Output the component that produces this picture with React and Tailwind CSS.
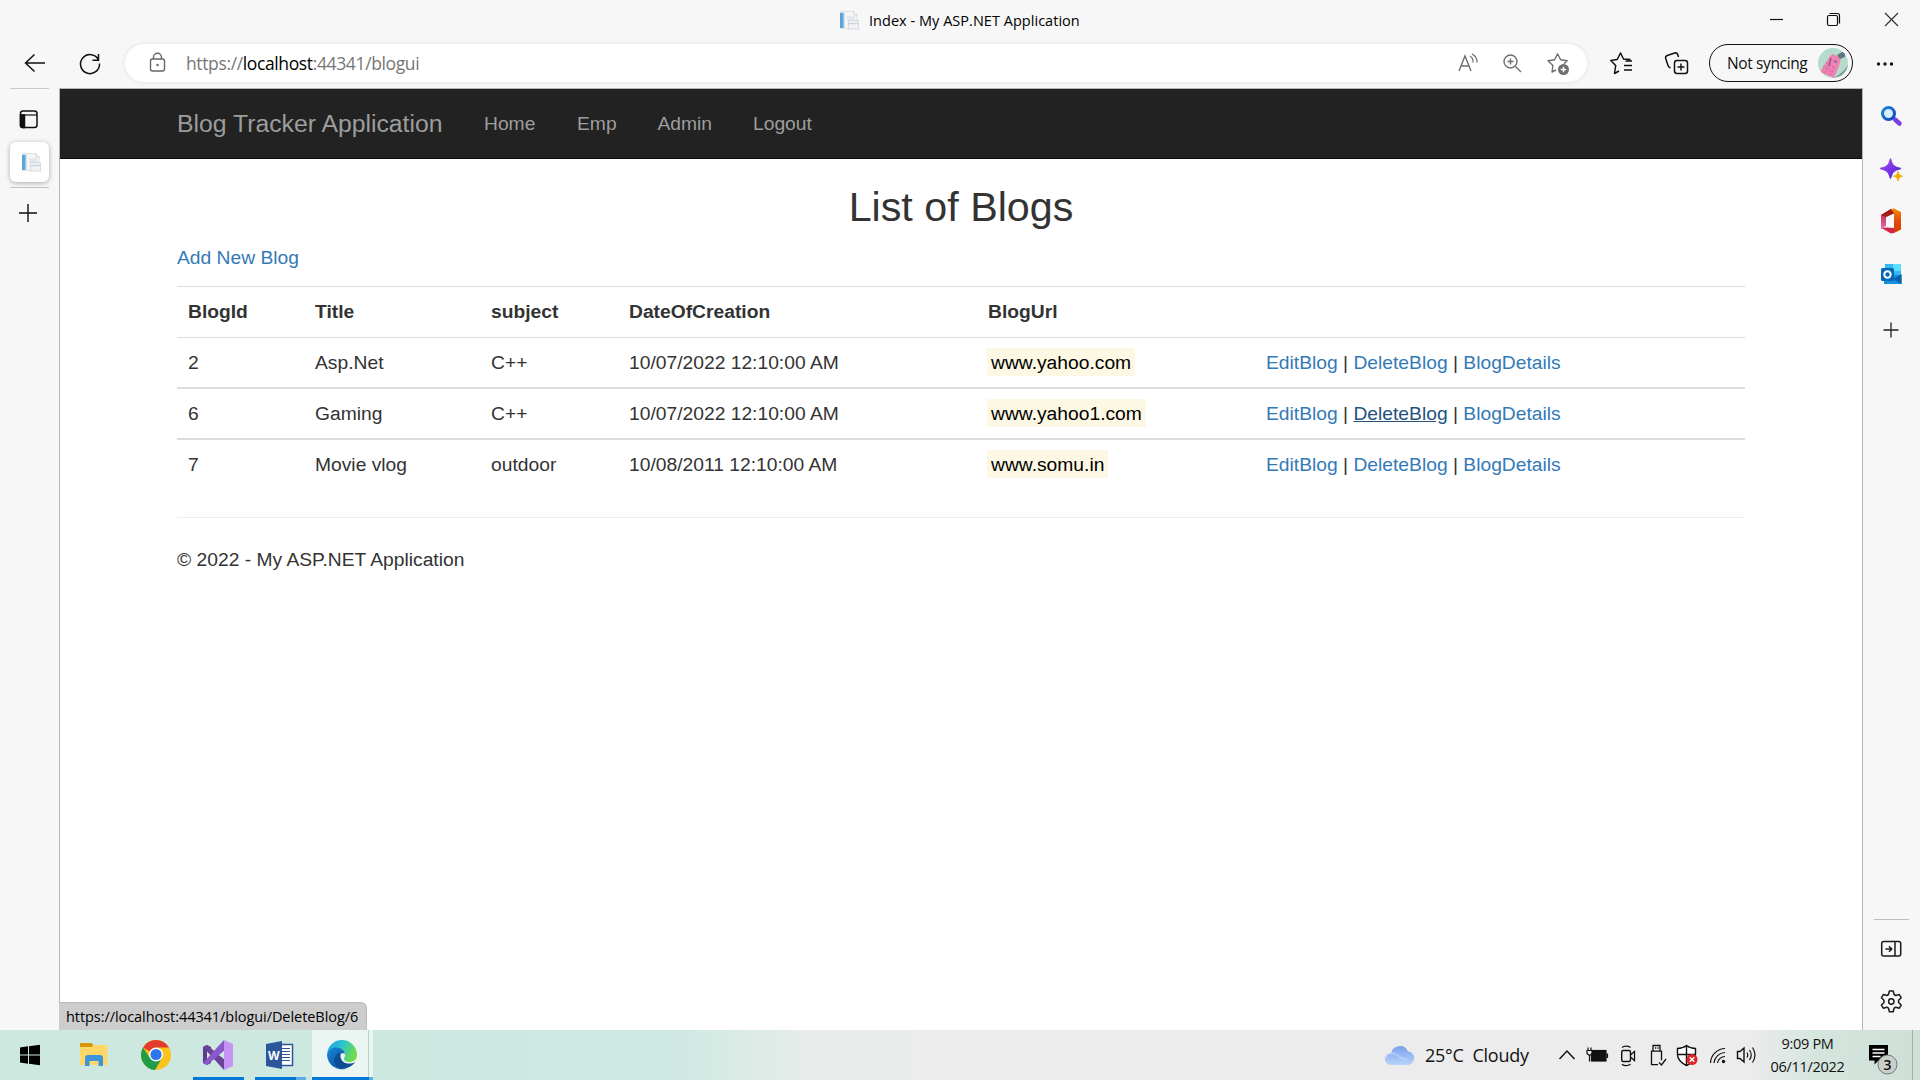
import React from "react";

const UI = "font-['Open_Sans',sans-serif]";

const rows = [
  { id: "2", title: "Asp.Net", subject: "C++", date: "10/07/2022 12:10:00 AM", url: "www.yahoo.com" },
  { id: "6", title: "Gaming", subject: "C++", date: "10/07/2022 12:10:00 AM", url: "www.yahoo1.com", hovered: true },
  { id: "7", title: "Movie vlog", subject: "outdoor", date: "10/08/2011 12:10:00 AM", url: "www.somu.in" },
];

const GRID = "grid grid-cols-[127px_176px_138px_359px_278px_490px] items-center";

function Favicon({ className }) {
  return (
    <svg width="20" height="20" viewBox="0 0 20 20" className={className}>
      <rect x="1" y="2.5" width="3.6" height="15.5" fill="#5aa6d8" />
      <rect x="0.5" y="0.5" width="4.5" height="2" fill="#e3e9ee" />
      <rect x="0.5" y="18" width="4.5" height="1.2" fill="#e3e9ee" />
      <path d="M5.5 1.5h9.5l3 3v14h-12.5z" fill="#f6f6f9" stroke="#dedee3" />
      <path d="M15 1.5v3.5h3" fill="#fff" stroke="#d0d0d6" />
      <rect x="8" y="6" width="8" height="4.5" fill="#e4e7ee" />
      <rect x="9.5" y="10.5" width="10" height="8.5" fill="#f0f2f8" stroke="#d6d9e2" />
      <path d="M10 13.5h9" stroke="#cfd4e2" strokeWidth="1.5" />
    </svg>
  );
}

function Plus({ size = 18, width = 1.3, color = "#111" }) {
  return (
    <svg width={size} height={size} viewBox="0 0 18 18" fill="none" stroke={color} strokeWidth={width}>
      <path d="M9 0v18M0 9h18" />
    </svg>
  );
}

function TitleBar() {
  return (
    <div className="grid h-10 grid-cols-[1fr_auto_1fr] items-center">
      <div />
      <div className="flex items-center gap-[10px]">
        <Favicon />
        <span className={`${UI} w-[212px] translate-y-px whitespace-nowrap text-[14.5px] tracking-[0.03px] text-black`}>Index - My ASP.NET Application</span>
      </div>
      <svg width="160" height="40" viewBox="0 0 160 40" className="justify-self-end" fill="none" stroke="#111" strokeWidth="1.2">
        <path d="M10 19.5h13" />
        <rect x="67.5" y="15.5" width="10" height="10" rx="1.5" />
        <path d="M69.5 13.5h8a2 2 0 0 1 2 2v8" />
        <path d="M125 13l13 13M138 13l-13 13" stroke="#333" />
      </svg>
    </div>
  );
}

function Toolbar() {
  return (
    <div className="flex h-12 items-center">
      <svg width="125" height="48" viewBox="0 0 125 48" fill="none" stroke="#111" strokeWidth="1.5">
        <path d="M25.5 23h19.5M34.5 14.5L25.5 23l9 8.5" />
        <path d="M98.6 20a9.5 9.5 0 1 0 .9 3.5M98.5 14v6.2h-6" />
      </svg>
      <div className="flex h-[38px] w-[1462px] -translate-y-px items-center rounded-full bg-white shadow-[0_0_5px_rgba(0,0,0,0.09)]">
        <svg width="61" height="38" viewBox="0 0 61 38" fill="none" stroke="#666" strokeWidth="1.4" className="shrink-0">
          <rect x="25.5" y="15" width="14" height="12" rx="2" />
          <path d="M28.5 15v-1.8a4 4 0 0 1 8 0v1.8" />
          <circle cx="32.5" cy="21" r="1.2" fill="#666" stroke="none" />
        </svg>
        <span className={`${UI} flex-1 whitespace-nowrap text-[17.5px] tracking-[-0.37px] text-[#767676]`}>
          https://<span className="text-black">localhost</span>:44341/blogui
        </span>
        <svg width="140" height="38" viewBox="0 0 140 38" fill="none" stroke="#6e6e6e" strokeWidth="1.4" className="shrink-0">
          <path d="M12 27l6-15 6 15M14.2 22h7.6" />
          <path d="M23 12a7 7 0 0 1 3 6.5M25 10a9 9 0 0 1 5 8.5" strokeWidth="1.2" />
          <circle cx="63.5" cy="17.5" r="6.5" />
          <path d="M68.5 22.5l5.5 5.5M63.5 14.5v6M60.5 17.5h6" />
          <path d="M109 26l-4 2 .9-6.5-5-4.7 6.700-1 3-6 3 6 6.5 1-3 3" strokeLinejoin="round" />
          <circle cx="116.5" cy="25.5" r="5.5" fill="#6e6e6e" stroke="none" />
          <path d="M116.5 22.7v5.6M113.7 25.5h5.6" stroke="#fff" />
        </svg>
      </div>
      <svg width="121" height="48" viewBox="0 0 121 48" fill="none" stroke="#111" strokeWidth="1.5" strokeLinejoin="round" className="shrink-0">
        <path d="M30.5 30l-4.5 2.5 1.2-8-5-5 6.5-1 3.3-6.5 3 6 7 .5M35.5 24.5h8M35.5 29h8M37 20h6.5" transform="translate(1.5 1)" />
        <rect x="87.5" y="20.5" width="13" height="13" rx="2.5" />
        <path d="M94 23.5v7M90.5 27h7M83.5 28a4 4 0 0 1-2.5-2.5l-2.300-7a2.5 2.500 0 0 1 1.500-3l7.500-2.500a2.5 2.500 0 0 1 3 1.500l.8 2.500" />
      </svg>
      <div className="ml-px flex h-[38px] w-36 -translate-y-px items-center justify-between rounded-full border-[1.5px] border-[#111] pl-[17px] pr-1">
        <span className={`${UI} translate-y-px whitespace-nowrap text-[15.5px] tracking-[-0.37px] text-[#111]`}>Not syncing</span>
        <svg width="30" height="30" viewBox="0 0 30 30">
          <clipPath id="avatarClip"><circle cx="15" cy="15" r="15" /></clipPath>
          <g clipPath="url(#avatarClip)">
            <rect width="30" height="30" fill="#b5dccb" />
            <path d="M31 15c-3 6-8 11-15 15h16z" fill="#78a596" />
            <path d="M12 8l3-2 4 2 4 2-2 8-5 12-14-6z" fill="#ef82b5" />
            <path d="M19 7l5-3 3 1v4l-5 2z" fill="#607780" />
            <path d="M13 10l-2 8M16 13l3 1" stroke="#8b5d80" strokeWidth="1.5" />
            <path d="M5 18l10 6M8 15l9 5M7 25l5-9M12 27l5-9" stroke="#d5609a" strokeWidth="1" strokeDasharray="2 1.5" />
          </g>
        </svg>
      </div>
      <svg width="66" height="48" viewBox="0 0 66 48" fill="#111">
        <circle cx="25.5" cy="24" r="1.7" /><circle cx="32" cy="24" r="1.7" /><circle cx="38.5" cy="24" r="1.7" />
      </svg>
    </div>
  );
}

function TabRail() {
  return (
    <aside className="flex w-[59px] flex-col items-center">
      <div className="h-px w-[39px] bg-[#c9c9c9]" />
      <svg width="20" height="20" viewBox="0 0 20 20" className="mr-[2px] mt-[20px]" fill="none" stroke="#111" strokeWidth="1.5">
        <rect x="1.5" y="2" width="16.5" height="16.5" rx="2.5" />
        <path d="M1.5 6h16.5" strokeWidth="1.2" />
        <path d="M1.5 6h4v12.5h-2a2 2 0 0 1-2-2z" fill="#111" />
      </svg>
      <div className="mt-[13px] flex h-10 w-[39px] items-center justify-center rounded-md bg-white shadow-[0_1px_5px_rgba(0,0,0,0.32)]">
        <Favicon className="ml-0.5" />
      </div>
      <div className="mt-[5px] h-px w-[39px] bg-[#c4c4c4]" />
      <div className="mr-[3px] mt-[16px]"><Plus width={1.4} /></div>
    </aside>
  );
}

function NavBar() {
  return (
    <nav className="flex h-[70px] items-center border-b border-[#080808] bg-[#222] pl-[117px] text-[19.25px] text-[#9d9d9d]">
      <a className="w-[307px] text-[24.75px]">Blog Tracker Application</a>
      <a className="w-[93px]">Home</a>
      <a className="w-[80.5px]">Emp</a>
      <a className="w-[95.5px]">Admin</a>
      <a>Logout</a>
    </nav>
  );
}

function BlogTable() {
  return (
    <div className="border-t border-[#ddd]">
      <div className={`${GRID} h-[50px] pb-0.5 font-bold`}>
        {["BlogId", "Title", "subject", "DateOfCreation", "BlogUrl"].map((h) => (
          <div key={h} className="pl-[11px]">{h}</div>
        ))}
      </div>
      {rows.map((r, i) => (
        <div key={r.id} className={`${GRID} ${i === 0 ? "h-[50px] border-t" : "h-[51px] border-t-2"} border-[#ddd]`}>
          <div className="pl-[11px]">{r.id}</div>
          <div className="pl-[11px]">{r.title}</div>
          <div className="pl-[11px]">{r.subject}</div>
          <div className="pl-[11px]">{r.date}</div>
          <div className="pl-[10px]"><span className="bg-[#fcf8e3] px-[4px] pb-[3px] pt-1 text-black">{r.url}</span></div>
          <div className="whitespace-nowrap pl-[11px]">
            <a className="text-[#337ab7]">EditBlog</a> |{" "}
            <a className={r.hovered ? "text-[#23527c] underline" : "text-[#337ab7]"}>DeleteBlog</a> |{" "}
            <a className="text-[#337ab7]">BlogDetails</a>
          </div>
        </div>
      ))}
    </div>
  );
}

function Page() {
  return (
    <main className="relative flex-1 border-x border-t border-[#b5b5b5] bg-white font-['Liberation_Sans',Arial,sans-serif] text-[19.25px] leading-[27px] text-[#333]">
      <NavBar />
      <div className="mx-[117px] w-[1568px]">
        <h2 className="pt-[26px] text-center text-[41.25px] leading-[45px]">List of Blogs</h2>
        <p className="mt-[14px] text-[#337ab7]">Add New Blog</p>
        <div className="mt-[15px]"><BlogTable /></div>
        <hr className="mt-[28px] border-[#eee]" />
        <p className="mt-[28px]">© 2022 - My ASP.NET Application</p>
      </div>
      <div className={`${UI} absolute bottom-0 left-[-1px] flex h-[28px] w-[308px] items-center whitespace-nowrap rounded-tr-md border-t border-r border-[#bbb] bg-[#cdcdcd] pl-[7px] text-[14.5px] tracking-[-0.06px] text-black`}>
        https://localhost:44341/blogui/DeleteBlog/6
      </div>
    </main>
  );
}

function SideBar() {
  return (
    <aside className="flex w-[57px] flex-col items-center justify-between">
      <svg width="57" height="260" viewBox="0 0 57 260" fill="none">
        <defs>
          <linearGradient id="lens" x1="0" y1="0" x2="1" y2="1"><stop stopColor="#1e8ad6" /><stop offset="1" stopColor="#1440b8" /></linearGradient>
          <linearGradient id="spark" x1="0" y1="0" x2="1" y2="1"><stop stopColor="#a64bf4" /><stop offset="1" stopColor="#4a1fd8" /></linearGradient>
          <linearGradient id="officeR" x1="0" y1="0" x2="0" y2="1"><stop stopColor="#f59000" /><stop offset="0.5" stopColor="#e24a0c" /><stop offset="1" stopColor="#d83b01" /></linearGradient>
          <linearGradient id="officeL" x1="0" y1="0" x2="0" y2="1"><stop stopColor="#b02030" /><stop offset="1" stopColor="#e66fb0" /></linearGradient>
        </defs>
        <path d="M32 31.5l4.5 4" stroke="#7b3fe4" strokeWidth="4.5" strokeLinecap="round" />
        <circle cx="25.5" cy="25.5" r="6" fill="#d4eefc" stroke="url(#lens)" strokeWidth="3" />
        <path d="M27.5 71c1.5 6.5 3.5 8 10 9.5-6.5 1.5-8.5 3.5-10 9.5-1.5-6-3.5-8-10-9.5 6.5-1.5 8.5-3 10-9.5z" fill="url(#spark)" stroke="url(#spark)" strokeWidth="1.3" strokeLinejoin="round" />
        <path d="M35 83.5c.7 3.3 1.4 4 4.5 4.7-3.1.7-3.8 1.4-4.5 4.6-.7-3.2-1.400-3.900-4.500-4.600 3.100-.7 3.800-1.400 4.500-4.700z" fill="#f2a900" stroke="#f2a900" />
        <g transform="translate(0 1)">
          <path d="M18 126l10-6v5l-5 3v9l-5 3z" fill="url(#officeL)" />
          <path d="M18 126l10-6 3 .5v4l-8 3.5z" fill="#a51b16" />
          <path d="M28 120l3-.5 7 3.500v17.500L31 144v-20z" fill="url(#officeR)" />
          <path d="M18.5 139l5-.5 7.500.5v5l-3 .5z" fill="#d6234a" />
        </g>
        <g transform="translate(0 1)">
          <rect x="22" y="175" width="16" height="14" fill="#35b8f1" /><rect x="30" y="175" width="8" height="7" fill="#5cdcff" />
          <path d="M21 186h17.5v9H21z" fill="#1490df" /><path d="M38.500 185v10l-8.500-5z" fill="#0a5fa8" />
          <rect x="18" y="179" width="13" height="13" rx="1.5" fill="#0768ba" />
          <circle cx="24.500" cy="185.500" r="3.200" stroke="#fff" strokeWidth="2" />
        </g>
        <path d="M28 234.500v15M20.500 242h15" stroke="#222" strokeWidth="1.3" />
      </svg>
      <svg width="57" height="112" viewBox="0 0 57 112" fill="none" stroke="#1b1b1b" strokeWidth="1.5" strokeLinejoin="round">
        <path d="M11 1.5h35" stroke="#bdbdbd" strokeWidth="1" />
        <rect x="18.7" y="23.5" width="19" height="14.5" rx="2" />
        <path d="M32 23.5v14.500M22.500 31h6M26 28.200L28.800 31l-2.800 2.800" />
        <g transform="translate(-0.3 0)">
          <path d="M25.800 76.500l.9-3.500h3.800l.9 3.500 1.700 1 3.500-1 1.900 3.300-2.600 2.500v2.200l2.600 2.500-1.900 3.200-3.500-1-1.700 1-.9 3.500h-3.800l-.9-3.500-1.700-1-3.500 1-1.900-3.200 2.600-2.500v-2.200l-2.600-2.500 1.900-3.300 3.500 1z" />
          <circle cx="28.600" cy="83.500" r="2.7" />
        </g>
      </svg>
    </aside>
  );
}

function TaskIcons() {
  return (
    <svg width="380" height="50" viewBox="0 0 380 50">
      <defs>
        <linearGradient id="edgeTop" x1="0" y1="0" x2="1" y2="0.4"><stop stopColor="#1b9de2" /><stop offset="0.5" stopColor="#2cc3d3" /><stop offset="1" stopColor="#6ddc4c" /></linearGradient>
        <linearGradient id="edgeLow" x1="0" y1="0" x2="1" y2="1"><stop stopColor="#1787d9" /><stop offset="1" stopColor="#0b4a94" /></linearGradient>
      </defs>
      <path d="M20 17.5l8-1.2v8.200h-8zM29 16.200l11-1.500v9.800H29zM20 25.500h8v8.200l-8-1.200zM29 25.500h11v9.800l-11-1.500z" fill="#000" />
      <rect x="80" y="15" width="27.5" height="20" fill="#ffd767" />
      <path d="M80 13h11.500l2 2-2 2H80z" fill="#d9980a" />
      <path d="M85 36V28a3 3 0 0 1 3-3h12a3 3 0 0 1 3 3v8h-4.500v-5h-9v5z" fill="#3c95dc" />
      <circle cx="156" cy="25" r="15" fill="#fcc31e" />
      <path d="M156 25L143 17.500A15 15 0 0 1 169 17.500H156z" fill="#e33b2e" />
      <path d="M143 17.500A15 15 0 0 0 155 40l7-12h-12z" fill="#229b48" />
      <circle cx="156" cy="24.500" r="7" fill="#fff" /><circle cx="156" cy="24.500" r="5.6" fill="#2e77ea" />
      <path d="M224 10l9 4v22l-9 4z" fill="#c493f5" />
      <path d="M203 17l4-2 4 2v16l-4 2-4-2z" fill="#5d3a8e" />
      <path d="M207 20.500l4 4.500-4 4.500z" fill="#cbe8df" />
      <path d="M207 15l17 14v11L203 17z" fill="#6a4299" />
      <path d="M224 10v11l-17 14-4-2z" fill="#8a58cb" />
      <path d="M224 21v8l-5-4z" fill="#cbe8df" />
      <rect x="280" y="14.500" width="12.500" height="21" fill="#fff" stroke="#2b579a" strokeWidth="1.5" />
      <path d="M281 18.500h9M281 21.500h9M281 24.500h9M281 27.500h9M281 30.500h9" stroke="#2b579a" strokeWidth="1.2" />
      <path d="M266 14l16-3v28l-16-3z" fill="#2b579a" />
      <text x="268" y="29.5" fontSize="12" fontWeight="700" fontFamily="Open Sans" fill="#fff" textLength="12">W</text>
      <rect x="312" y="0" width="61" height="50" fill="#fff" opacity="0.6" /><path d="M368.5 0v50" stroke="#b7cfc6" />
      <path d="M327 25a15 15 0 0 1 30 0c0 5-4 7-8 7-3 0-5-1-5-3 0-1 1-2 1-4 0-4-4-7-8-7-5 0-9 3-10 7z" fill="url(#edgeTop)" />
      <path d="M327 25c1-5 5-7.500 9-7.500 5 0 8 3 9 6-6-1-9 2-9 7 0 5 5 9 11 8a15 15 0 0 1-20-13.500z" fill="url(#edgeLow)" />
      <path d="M341 22.500c-5 1-8 5-6.500 10 1.500 5 7 7.500 12.500 5.500 4-1.500 7-4 8.500-6-4 2-9 2-12 0-3-2.500-3.500-6-2.500-9.500z" fill="#0c4e96" />
      <path d="M193 47h51v3h-51zM255 47h41v3h-41zM312 47h57v3h-57z" fill="#0078d7" /><path d="M296 47h10v3h-10zM369 47h4v3h-4z" fill="#62aae4" />
    </svg>
  );
}

function Tray() {
  return (
    <svg width="203" height="50" viewBox="0 0 203 50" fill="none" stroke="#111" strokeWidth="1.4" className="shrink-0">
      <path d="M4.5 29l7.5-8 7.5 8" />
      <rect x="38" y="22.5" width="12" height="6.5" fill="#000" stroke="none" />
      <rect x="36.500" y="20.500" width="14.500" height="10.500" strokeWidth="1.200" fill="#111" /><path d="M52.3 23.500v4.500" strokeWidth="1.6" />
      <path d="M33 17.500v3M36 17.500v3M32 20.500h5v3l-1.500 1.500h-2L32 23.500zM34.500 25v6.500" strokeWidth="1.2" fill="#ececec" />
      <rect x="66.7" y="20.500" width="8.800" height="11" rx="1.5" />
      <path d="M76 24.500l3.500-3v9l-3.500-3M67 17.500c2-1.800 6-1.800 8.500 0M67 34.300c2 1.800 6 1.800 8.500 0" strokeWidth="1.3" />
      <path d="M103 34.700h-6.500v-13.500h10v9" strokeWidth="1.3" /><path d="M98 21v-5.500h7V21M100 18h1.200M102.500 18h1.200M104 32.500l2.500 2.500 4.500-6" strokeWidth="1.3" />
      <g transform="translate(4 0)">
        <path d="M127.500 15.500c2.500 2 5.500 3 9 3v6c0 5-4 8.500-9 11-5-2.500-9-6-9-11v-6c3.500 0 6.500-1 9-3z" fill="#fff" />
        <path d="M127.500 16v20M118.500 24.500h18" />
      </g>
      <circle cx="137" cy="29.500" r="5.5" fill="#dc2626" stroke="none" /><path d="M134.700 27.200l4.600 4.600M139.300 27.200l-4.600 4.600" stroke="#fff" strokeWidth="1.4" />
      <path d="M155.500 33a15 15 0 0 1 14.500-14.500M159 33a11.500 11.500 0 0 1 11-10.500M162.500 33a7.500 7.500 0 0 1 7.500-6.500" strokeWidth="1.2" /><circle cx="168.500" cy="31.500" r="1.7" fill="#111" stroke="none" />
      <path d="M182.500 21.500h2.500l4-3.500v14l-4-3.500h-2.500z" /><path d="M192 22.500q1.500 2.500 0 5M194.500 20q3.500 5 0 10M197.500 17.500q5 7.500 0 15" strokeWidth="1.2" />
    </svg>
  );
}

function TaskBar() {
  return (
    <footer className={`${UI} flex h-[50px] items-center justify-between bg-[linear-gradient(90deg,#cde8df_0%,#cbe8e0_25%,#d0eae3_36%,#e7ecea_42%,#ececec_50%,#ececec_91%,#d3e5dd_95%,#cddfd7_100%)] text-[#111]`}>
      <TaskIcons />
      <div className="flex h-full items-center">
        <svg width="30" height="22" viewBox="0 0 30 22">
          <defs><linearGradient id="cloud" x1="0" y1="0" x2="0" y2="1"><stop stopColor="#7ba1ec" /><stop offset="1" stopColor="#b8d3fb" /></linearGradient></defs>
          <path d="M6 21a6 6 0 0 1 0-12 9 9 0 0 1 17-1.500A6.800 6.800 0 0 1 23.500 21z" fill="url(#cloud)" />
          <path d="M1 14a6 6 0 0 1 9-4c5 2 7 6 12 5" fill="none" stroke="#c9dcfb" strokeWidth="1" />
        </svg>
        <span className="ml-[10px] w-[130px] whitespace-pre text-[18px] tracking-[-0.25px]">25°C  Cloudy</span>
        <Tray />
        <div className="w-[99px] text-center text-[14.5px] leading-[23px] tracking-[-0.3px]">
          <div>9:09 PM</div>
          <div>06/11/2022</div>
        </div>
        <svg width="63" height="50" viewBox="-1 0 63 50">
          <path d="M11 15h19v15.500H20.500l-4 4v-4H11z" fill="#000" />
          <path d="M14.500 19.500h12M14.500 23h12M14.500 26.500h8" stroke="#fff" strokeWidth="1.3" />
          <circle cx="29.500" cy="34.500" r="9.5" fill="#c8d0cc" stroke="#777" />
          <text x="29.500" y="39.500" fontSize="14" fontWeight="600" fontFamily="Open Sans" textAnchor="middle" fill="#111">3</text>
          <path d="M54.500 0v50" stroke="#9fb0a8" />
        </svg>
      </div>
    </footer>
  );
}

export default function App() {
  return (
    <div className="flex h-[1080px] w-[1920px] flex-col overflow-hidden bg-[#f7f7f7]">
      <TitleBar />
      <Toolbar />
      <div className="flex min-h-0 flex-1">
        <TabRail />
        <Page />
        <SideBar />
      </div>
      <TaskBar />
    </div>
  );
}
